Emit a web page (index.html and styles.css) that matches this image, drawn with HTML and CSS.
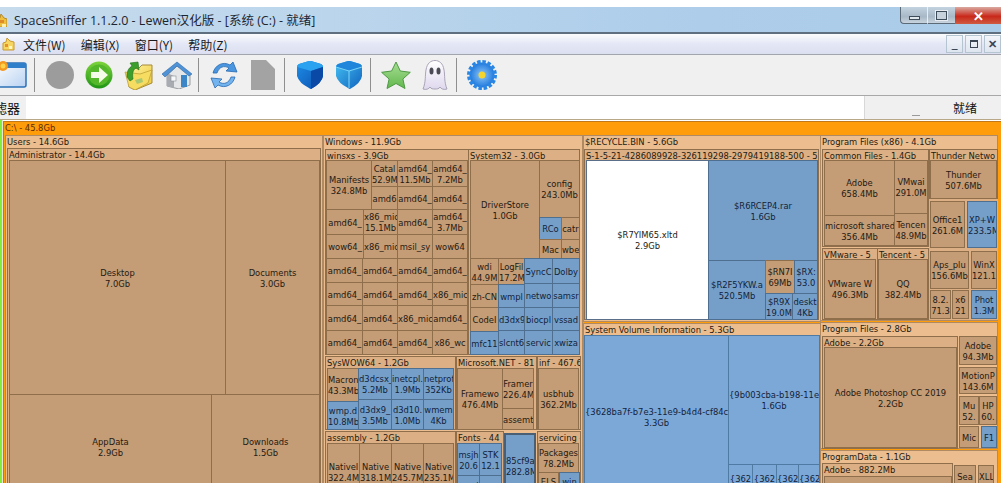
FILE: index.html
```html
<!DOCTYPE html>
<html lang="zh-CN">
<head>
<meta charset="utf-8">
<title>SpaceSniffer</title>
<link rel="stylesheet" href="styles.css">
</head>
<body>
<div class="app">
  <div class="topgap"></div>
  <header class="titlebar">
    <svg class="title-icon" viewBox="0 0 7 14"><path d="M-6 7l6-2 1-4 3 4 3 1v8H-6z" fill="#f0bf3c" stroke="#b98a24"/><path d="M0 7h4v3H0z" fill="#e08a28"/><path d="M2 11h4v3H2z" fill="#fff0b0"/></svg>
    <span class="title-text">SpaceSniffer 1.1.2.0 - Lewen汉化版 - [系统 (C:) - 就绪]</span>
    <div class="winctl">
      <span class="wbtn wmin"><i></i></span>
      <span class="wbtn wmax"><i></i></span>
      <span class="wbtn wclose">✕</span>
    </div>
  </header>
  <nav class="menubar">
    <svg class="menu-icon" viewBox="0 0 13 14"><path d="M1 13V6l3-1 1-4 3 3 4 1v8z" fill="#f6d660" stroke="#c99a30"/><path d="M3 7h3v3H3z" fill="#e8902a"/><path d="M7 9h3v3H7z" fill="#fff6c8"/></svg>
    <span class="menu-item">文件(W)</span>
    <span class="menu-item">编辑(X)</span>
    <span class="menu-item">窗口(Y)</span>
    <span class="menu-item">帮助(Z)</span>
    <div class="mdictl">
      <span class="mbtn">_</span>
      <span class="mbtn mrest"><i></i></span>
      <span class="mbtn mx">✕</span>
    </div>
  </nav>
  <div class="toolbar">
    <span class="tb-first">
      <svg width="27" height="28" viewBox="0 0 27 28"><defs><linearGradient id="w1" x1="0" y1="0" x2="1" y2="1"><stop offset="0" stop-color="#ffffff"/><stop offset="1" stop-color="#b9d2f2"/></linearGradient></defs><rect x="-6" y="2" width="32" height="24" rx="2" fill="url(#w1)" stroke="#2c72b8" stroke-width="1.5"/><rect x="-6" y="2" width="32" height="5" fill="#2f7fcb"/><circle cx="3" cy="5" r="5" fill="#f59a20"/><circle cx="3" cy="5" r="2.5" fill="#ffd24a"/></svg>
    </span>
    <i class="sep"></i>
    <span class="tb"><svg width="28" height="28" viewBox="0 0 28 28"><circle cx="14" cy="14" r="14" fill="#9c9c9c"/></svg></span>
    <span class="tb"><svg width="28" height="28" viewBox="0 0 28 28"><defs><linearGradient id="g1" x1="0" y1="0" x2="0" y2="1"><stop offset="0" stop-color="#7ed43c"/><stop offset="1" stop-color="#1e9416"/></linearGradient></defs><circle cx="14" cy="14" r="13.5" fill="url(#g1)"/><circle cx="14" cy="14" r="10.5" fill="#54b82a"/><path d="M6 11h8V6l9 8-9 8v-5H6z" fill="#f4fbe8"/></svg></span>
    <span class="tb"><svg width="30" height="30" viewBox="0 0 30 30"><defs><linearGradient id="f1" x1="0" y1="0" x2="1" y2="1"><stop offset="0" stop-color="#fff3a0"/><stop offset="1" stop-color="#ecc636"/></linearGradient></defs><path d="M7 8h9l3-3h10v18l-17 7-6-3z" fill="url(#f1)" stroke="#a58a38"/><path d="M6 27L2 12l15 2 12-4-4 13-13 7z" fill="#f6dd62" stroke="#b8982e" stroke-width=".7"/><path d="M4 17c0-7 2-9 5-11L7 3l8-1 1 8-3-2c-3 2-4 5-3 11l-3 2z" fill="#3c9e2c" stroke="#1e6e18" stroke-width=".6"/><path d="M12 20l7-2 1 4-6 2z" fill="#a9c870"/></svg></span>
    <span class="tb"><svg width="30" height="28" viewBox="0 0 30 28"><path d="M5 14v11l12 3 11-4V13L15 5z" fill="#e4e6e8" stroke="#85898e" stroke-width=".8"/><path d="M5 25l7 2V15l-7-3z" fill="#a8acb2"/><path d="M0 13L15 1l15 12-3 2L15 5 3 16z" fill="#4f92d6" stroke="#2e69a8" stroke-width=".6"/><rect x="19" y="14" width="6" height="12" fill="#3c86c8"/><rect x="9" y="15" width="5" height="5" fill="#f6f7f8" stroke="#8b8f94" stroke-width=".6"/></svg></span>
    <i class="sep sep-mid"></i>
    <span class="tb"><svg width="30" height="30" viewBox="0 0 30 30"><path d="M4 13C6 5 14 1 21 5l3-3 4 10-11-1 3-3c-5-3-10-1-12 5z" fill="#4a96e0" stroke="#2769b0" stroke-width=".8"/><path d="M26 17c-2 8-10 12-17 8l-3 3-4-10 11 1-3 3c5 3 10 1 12-5z" fill="#73b3ee" stroke="#2769b0" stroke-width=".8"/></svg></span>
    <span class="tb"><svg width="24" height="30" viewBox="0 0 24 30"><path d="M0 0h15l9 9v21H0z" fill="#a3a3a3"/></svg></span>
    <i class="sep sep-mid"></i>
    <span class="tb"><svg width="27" height="28" viewBox="0 0 27 28"><defs><linearGradient id="c1" x1="0" y1="0" x2="1" y2="1"><stop offset="0" stop-color="#1e8fe8"/><stop offset="1" stop-color="#0c4fae"/></linearGradient></defs><path d="M1 6Q1 4 3 3L13 0Q14 0 15 0L25 3Q27 4 27 6V15Q26 22 15 28Q14 28 13 27Q3 22 1 15z" fill="url(#c1)"/><path d="M1 6Q1 4 3 3L13 0Q14 0 15 0L25 3Q27 4 27 6L15 10z" fill="#2aa2ef"/><path d="M15 10L27 6V15Q26 22 15 28z" fill="#0b49a6"/></svg></span>
    <span class="tb"><svg width="27" height="28" viewBox="0 0 27 28"><defs><linearGradient id="c2" x1="0" y1="0" x2="1" y2="1"><stop offset="0" stop-color="#45c0f2"/><stop offset="1" stop-color="#0f62be"/></linearGradient></defs><path d="M1 6Q1 4 3 3L13 0Q14 0 15 0L25 3Q27 4 27 6V15Q26 22 15 28Q14 28 13 27Q3 22 1 15z" fill="url(#c2)"/><path d="M1 6Q1 4 3 3L13 0Q14 0 15 0L25 3Q27 4 27 6L14 10z" fill="#1f86dc"/><path d="M14 10v17" stroke="#80d8f8" stroke-width="1"/><path d="M1 6l13 4 13-4" fill="none" stroke="#7ad4f6" stroke-width="1"/></svg></span>
    <i class="sep sep-mid"></i>
    <span class="tb"><svg width="30" height="28" viewBox="0 0 30 28"><defs><linearGradient id="s1" x1="0" y1="0" x2="0" y2="1"><stop offset="0" stop-color="#a7dd92"/><stop offset="1" stop-color="#62b84e"/></linearGradient></defs><path d="M15 1l4.300 9 10 1.300-7.400 6.700 2.100 9.500-9-5-9 5 2.100-9.500L.6 11.300l10-1.300z" fill="url(#s1)" stroke="#4e9a44"/></svg></span>
    <span class="tb"><svg width="26" height="30" viewBox="0 0 26 30"><defs><linearGradient id="h1" x1="0" y1="0" x2="0" y2="1"><stop offset="0" stop-color="#ffffff"/><stop offset="1" stop-color="#dfd8ee"/></linearGradient></defs><path d="M1 29C4 22 3 15 4 10 5 3 9 .5 13 .5S21 3 22 10c1 5 0 12 3 19-3 1-6 0-7-2-1 2-3 2-5 2s-4 0-5-2c-1 2-4 3-7 2z" fill="url(#h1)" stroke="#a9a3b8"/><ellipse cx="9.500" cy="11" rx="2" ry="3.600" fill="#4a4a55"/><ellipse cx="16.500" cy="11" rx="2" ry="3.600" fill="#4a4a55"/></svg></span>
    <i class="sep sep-mid"></i>
    <span class="tb"><svg width="30" height="30" viewBox="0 0 30 30"><defs><radialGradient id="b1"><stop offset="0" stop-color="#8fc8fa"/><stop offset="1" stop-color="#1f78dc"/></radialGradient></defs><circle cx="15" cy="15" r="12.500" fill="url(#b1)"/><circle cx="15" cy="15" r="13" fill="none" stroke="#2a86e4" stroke-width="4" stroke-dasharray="3.400 1.700"/><circle cx="15" cy="15" r="3.500" fill="#f4d42e"/></svg></span>
  </div>
  <div class="filterbar">
    <label class="filter-label">滤器</label>
    <div class="filter-input"></div>
    <span class="filter-grip"></span>
    <span class="filter-status">就绪</span>
  </div>
  <main class="treemap">
    <div class="t root" style="left:3px;top:1px;width:1000px;height:366px"><b>C:\ - 45.8Gb</b></div>

    <div class="t l1" style="left:5px;top:15px;width:318px;height:350px"><b>Users - 14.6Gb</b></div>
    <div class="t l2" style="left:7px;top:28px;width:314px;height:340px"><b>Administrator - 14.4Gb</b></div>
    <div class="t lf" style="left:9px;top:40px;width:217px;height:235px"><p>Desktop<br>7.0Gb</p></div>
    <div class="t lf" style="left:225px;top:40px;width:95px;height:235px"><p>Documents<br>3.0Gb</p></div>
    <div class="t lf" style="left:9px;top:274px;width:203px;height:105px"><p>AppData<br>2.9Gb</p></div>
    <div class="t lf" style="left:211px;top:274px;width:109px;height:105px"><p>Downloads<br>1.5Gb</p></div>

    <div class="t l1" style="left:323px;top:15px;width:260px;height:350px"><b>Windows - 11.9Gb</b></div>
    <div class="t l2" style="left:325px;top:29px;width:144px;height:206px"><b>winsxs - 3.9Gb</b></div>
    <div class="t lf" style="left:326px;top:40px;width:46px;height:50px"><p>Manifests<br>324.8Mb</p></div>
    <div class="t lf" style="left:371px;top:40px;width:27px;height:27px"><p>Catal<br>52.9M</p></div>
    <div class="t lf" style="left:371px;top:66px;width:27px;height:24px"><p>amd6</p></div>
    <div class="t lf" style="left:397px;top:40px;width:36px;height:27px"><p>amd64_<br>11.5Mb</p></div>
    <div class="t lf" style="left:432px;top:40px;width:36px;height:27px"><p>amd64_<br>7.2Mb</p></div>
    <div class="t lf" style="left:397px;top:66px;width:36px;height:24px"><p>amd64_</p></div>
    <div class="t lf" style="left:432px;top:66px;width:36px;height:24px"><p>amd64_</p></div>
    <div class="t lf" style="left:326px;top:89px;width:38px;height:26px"><p>amd64_</p></div>
    <div class="t lf" style="left:363px;top:89px;width:35px;height:26px"><p>x86_mic<br>15.1Mb</p></div>
    <div class="t lf" style="left:397px;top:89px;width:36px;height:26px"><p>amd64_</p></div>
    <div class="t lf" style="left:432px;top:89px;width:36px;height:26px"><p>amd64_<br>3.7Mb</p></div>
    <div class="t lf" style="left:326px;top:114px;width:38px;height:25px"><p>wow64_</p></div>
    <div class="t lf" style="left:363px;top:114px;width:35px;height:25px"><p>x86_mic</p></div>
    <div class="t lf" style="left:397px;top:114px;width:36px;height:25px"><p>msil_sy</p></div>
    <div class="t lf" style="left:432px;top:114px;width:36px;height:25px"><p>wow64</p></div>
    <div class="t lf" style="left:326px;top:138px;width:37px;height:25px"><p>amd64_</p></div>
    <div class="t lf" style="left:362px;top:138px;width:36px;height:25px"><p>amd64_</p></div>
    <div class="t lf" style="left:397px;top:138px;width:36px;height:25px"><p>amd64_</p></div>
    <div class="t lf" style="left:432px;top:138px;width:36px;height:25px"><p>amd64_</p></div>
    <div class="t lf" style="left:326px;top:162px;width:37px;height:24px"><p>amd64_</p></div>
    <div class="t lf" style="left:362px;top:162px;width:36px;height:24px"><p>amd64_</p></div>
    <div class="t lf" style="left:397px;top:162px;width:36px;height:24px"><p>amd64_</p></div>
    <div class="t lf" style="left:432px;top:162px;width:36px;height:24px"><p>x86_mic</p></div>
    <div class="t lf" style="left:326px;top:185px;width:37px;height:26px"><p>amd64_</p></div>
    <div class="t lf" style="left:362px;top:185px;width:36px;height:26px"><p>amd64_</p></div>
    <div class="t lf" style="left:397px;top:185px;width:36px;height:26px"><p>x86_mic</p></div>
    <div class="t lf" style="left:432px;top:185px;width:36px;height:26px"><p>amd64_</p></div>
    <div class="t lf" style="left:326px;top:210px;width:37px;height:25px"><p>amd64_</p></div>
    <div class="t lf" style="left:362px;top:210px;width:36px;height:25px"><p>amd64_</p></div>
    <div class="t lf" style="left:397px;top:210px;width:36px;height:25px"><p>amd64_</p></div>
    <div class="t lf" style="left:432px;top:210px;width:36px;height:25px"><p>x86_wc</p></div>

    <div class="t l2" style="left:468px;top:29px;width:112px;height:206px"><b>System32 - 3.0Gb</b></div>
    <div class="t lf" style="left:470px;top:40px;width:70px;height:99px"><p>DriverStore<br>1.0Gb</p></div>
    <div class="t lf" style="left:539px;top:40px;width:41px;height:58px"><p>config<br>243.0Mb</p></div>
    <div class="t bl" style="left:539px;top:97px;width:23px;height:23px"><p>RCo</p></div>
    <div class="t lf" style="left:561px;top:97px;width:19px;height:23px"><p>catr</p></div>
    <div class="t lf" style="left:539px;top:119px;width:23px;height:20px"><p>Mac</p></div>
    <div class="t lf" style="left:561px;top:119px;width:19px;height:20px"><p>wbe</p></div>
    <div class="t lf" style="left:470px;top:138px;width:29px;height:27px"><p>wdi<br>44.9M</p></div>
    <div class="t lf" style="left:498px;top:138px;width:27px;height:27px"><p>LogFil<br>17.2M</p></div>
    <div class="t bl" style="left:524px;top:138px;width:29px;height:26px"><p>SyncC</p></div>
    <div class="t bl" style="left:552px;top:138px;width:28px;height:26px"><p>Dolby</p></div>
    <div class="t lf" style="left:470px;top:164px;width:29px;height:24px"><p>zh-CN</p></div>
    <div class="t lf" style="left:470px;top:187px;width:29px;height:25px"><p>CodeI</p></div>
    <div class="t bl" style="left:498px;top:164px;width:27px;height:24px"><p>wmpl</p></div>
    <div class="t bl" style="left:498px;top:187px;width:27px;height:25px"><p>d3dx9</p></div>
    <div class="t bl" style="left:524px;top:163px;width:29px;height:25px"><p>netwo</p></div>
    <div class="t bl" style="left:552px;top:163px;width:28px;height:25px"><p>samsr</p></div>
    <div class="t bl" style="left:524px;top:187px;width:29px;height:24px"><p>biocpl</p></div>
    <div class="t bl" style="left:552px;top:187px;width:28px;height:24px"><p>vssad</p></div>
    <div class="t bl" style="left:470px;top:211px;width:29px;height:24px"><p>mfc11</p></div>
    <div class="t bl" style="left:498px;top:210px;width:27px;height:25px"><p>slcnt6</p></div>
    <div class="t bl" style="left:524px;top:210px;width:29px;height:25px"><p>servic</p></div>
    <div class="t bl" style="left:552px;top:210px;width:28px;height:25px"><p>xwiza</p></div>

    <div class="t l2" style="left:325px;top:236px;width:131px;height:74px"><b>SysWOW64 - 1.2Gb</b></div>
    <div class="t lf" style="left:327px;top:248px;width:32px;height:34px"><p>Macron<br>43.3Mb</p></div>
    <div class="t bl" style="left:358px;top:248px;width:34px;height:32px"><p>d3dcsx_<br>5.2Mb</p></div>
    <div class="t bl" style="left:391px;top:248px;width:33px;height:32px"><p>inetcpl.<br>1.9Mb</p></div>
    <div class="t bl" style="left:423px;top:248px;width:31px;height:32px"><p>netprof<br>352Kb</p></div>
    <div class="t bl" style="left:327px;top:281px;width:32px;height:29px"><p>wmp.d<br>10.8Mb</p></div>
    <div class="t bl" style="left:358px;top:279px;width:34px;height:31px"><p>d3dx9_<br>3.5Mb</p></div>
    <div class="t bl" style="left:391px;top:279px;width:33px;height:31px"><p>d3d10.<br>1.0Mb</p></div>
    <div class="t bl" style="left:423px;top:279px;width:31px;height:31px"><p>wmem<br>4Kb</p></div>

    <div class="t l2" style="left:456px;top:236px;width:81px;height:74px"><b>Microsoft.NET - 81</b></div>
    <div class="t lf" style="left:457px;top:248px;width:46px;height:62px"><p>Framewo<br>476.4Mb</p></div>
    <div class="t lf" style="left:502px;top:248px;width:32px;height:41px"><p>Framer<br>226.4M</p></div>
    <div class="t lf" style="left:502px;top:288px;width:32px;height:22px"><p>assemt</p></div>
    <div class="t l2" style="left:537px;top:236px;width:44px;height:74px"><b>inf - 467.6</b></div>
    <div class="t lf" style="left:538px;top:248px;width:41px;height:62px"><p>usbhub<br>362.2Mb</p></div>

    <div class="t l2" style="left:325px;top:311px;width:131px;height:80px"><b>assembly - 1.2Gb</b></div>
    <div class="t lf" style="left:327px;top:323px;width:33px;height:58px"><p>NativeI<br>322.4M</p></div>
    <div class="t lf" style="left:359px;top:323px;width:33px;height:58px"><p>Native<br>318.1M</p></div>
    <div class="t lf" style="left:391px;top:323px;width:33px;height:58px"><p>Native<br>245.7M</p></div>
    <div class="t lf" style="left:423px;top:323px;width:31px;height:58px"><p>Native<br>235.1M</p></div>

    <div class="t l2" style="left:456px;top:311px;width:48px;height:80px"><b>Fonts - 44</b></div>
    <div class="t bl" style="left:457px;top:323px;width:23px;height:33px"><p>msjh<br>20.6</p></div>
    <div class="t bl" style="left:479px;top:323px;width:23px;height:33px"><p>STK<br>12.1</p></div>
    <div class="t bl" style="left:457px;top:355px;width:23px;height:20px"><p>msoi</p></div>
    <div class="t bl" style="left:479px;top:355px;width:23px;height:20px"><p>ygas</p></div>
    <div class="t bl bl-strong" style="left:504px;top:313px;width:32px;height:66px"><p>85cf9a<br>282.8M</p></div>

    <div class="t l2" style="left:537px;top:311px;width:44px;height:80px"><b>servicing -</b></div>
    <div class="t lf" style="left:538px;top:323px;width:41px;height:30px"><p>Packages<br>78.2Mb</p></div>
    <div class="t lf" style="left:538px;top:352px;width:21px;height:18px"><p>ELS</p></div>
    <div class="t bl" style="left:559px;top:352px;width:21px;height:18px"><p>win</p></div>

    <div class="t l1" style="left:583px;top:15px;width:238px;height:187px"><b>$RECYCLE.BIN - 5.6Gb</b></div>
    <div class="t l2" style="left:584px;top:29px;width:235px;height:171px"><b>S-1-5-21-4286089928-326119298-2979419188-500 - 5.6</b></div>
    <div class="t wh" style="left:586px;top:40px;width:123px;height:160px"><p>$R7YIM65.xltd<br>2.9Gb</p></div>
    <div class="t bl" style="left:708px;top:40px;width:110px;height:101px"><p>$R6RCEP4.rar<br>1.6Gb</p></div>
    <div class="t bl" style="left:708px;top:140px;width:58px;height:60px"><p>$R2F5YKW.a<br>520.5Mb</p></div>
    <div class="t lf" style="left:765px;top:140px;width:30px;height:34px"><p>$RN7I<br>69Mb</p></div>
    <div class="t bl" style="left:794px;top:140px;width:24px;height:34px"><p>$RX:<br>53.0</p></div>
    <div class="t bl" style="left:765px;top:173px;width:28px;height:27px"><p>$R9X<br>19.0M</p></div>
    <div class="t bl" style="left:792px;top:173px;width:26px;height:27px"><p>deskt<br>4Kb</p></div>

    <div class="t l1" style="left:583px;top:203px;width:238px;height:180px"><b>System Volume Information - 5.3Gb</b></div>
    <div class="t sv" style="left:584px;top:215px;width:145px;height:164px"><p>{3628ba7f-b7e3-11e9-b4d4-cf84cf2<br>3.3Gb</p></div>
    <div class="t sv" style="left:728px;top:215px;width:92px;height:130px"><p>{9b003cba-b198-11e9<br>1.6Gb</p></div>
    <div class="t sv" style="left:728px;top:344px;width:25px;height:28px"><p>{362</p></div>
    <div class="t sv" style="left:752px;top:344px;width:25px;height:28px"><p>{362</p></div>
    <div class="t sv" style="left:776px;top:344px;width:23px;height:28px"><p>{362</p></div>
    <div class="t sv" style="left:798px;top:344px;width:22px;height:28px"><p>{362</p></div>

    <div class="t l1" style="left:820px;top:15px;width:178px;height:186px"><b>Program Files (x86) - 4.1Gb</b></div>
    <div class="t l2" style="left:822px;top:29px;width:107px;height:98px"><b>Common Files - 1.4Gb</b></div>
    <div class="t lf" style="left:824px;top:40px;width:71px;height:56px"><p>Adobe<br>658.4Mb</p></div>
    <div class="t lf" style="left:894px;top:40px;width:34px;height:54px"><p>VMwai<br>291.0M</p></div>
    <div class="t lf" style="left:824px;top:95px;width:71px;height:31px"><p>microsoft shared<br>356.4Mb</p></div>
    <div class="t lf" style="left:894px;top:93px;width:34px;height:33px"><p>Tencen<br>48.9Mb</p></div>
    <div class="t l2" style="left:929px;top:29px;width:69px;height:50px"><b>Thunder Netwo</b></div>
    <div class="t lf" style="left:930px;top:40px;width:67px;height:39px"><p>Thunder<br>507.6Mb</p></div>
    <div class="t l2 group" style="left:929px;top:79px;width:69px;height:50px"></div>
    <div class="t lf" style="left:930px;top:81px;width:35px;height:47px"><p>Office1<br>261.6M</p></div>
    <div class="t bl" style="left:967px;top:81px;width:30px;height:47px"><p>XP+W<br>233.5M</p></div>
    <div class="t l2" style="left:822px;top:128px;width:56px;height:72px"><b>VMware - 5</b></div>
    <div class="t lf" style="left:824px;top:139px;width:52px;height:60px"><p>VMware W<br>496.3Mb</p></div>
    <div class="t l2" style="left:877px;top:128px;width:52px;height:72px"><b>Tencent - 5</b></div>
    <div class="t lf" style="left:878px;top:139px;width:50px;height:60px"><p>QQ<br>382.4Mb</p></div>
    <div class="t l2 group" style="left:929px;top:129px;width:69px;height:71px"></div>
    <div class="t lf" style="left:930px;top:131px;width:39px;height:38px"><p>Aps_plu<br>156.6Mb</p></div>
    <div class="t lf" style="left:971px;top:131px;width:26px;height:38px"><p>WinX<br>121.1</p></div>
    <div class="t lf" style="left:930px;top:170px;width:21px;height:29px"><p>8.2.<br>71.3</p></div>
    <div class="t lf" style="left:952px;top:170px;width:17px;height:29px"><p>x6<br>21</p></div>
    <div class="t bl" style="left:971px;top:170px;width:26px;height:29px"><p>Phot<br>1.3M</p></div>

    <div class="t l1" style="left:820px;top:202px;width:178px;height:127px"><b>Program Files - 2.8Gb</b></div>
    <div class="t l2" style="left:822px;top:216px;width:136px;height:113px"><b>Adobe - 2.2Gb</b></div>
    <div class="t lf" style="left:824px;top:227px;width:133px;height:101px"><p>Adobe Photoshop CC 2019<br>2.2Gb</p></div>
    <div class="t lf" style="left:959px;top:216px;width:38px;height:29px"><p>Adobe<br>94.3Mb</p></div>
    <div class="t lf" style="left:959px;top:247px;width:38px;height:27px"><p>MotionP<br>143.6M</p></div>
    <div class="t lf" style="left:959px;top:276px;width:20px;height:29px"><p>Mu<br>52.</p></div>
    <div class="t lf" style="left:979px;top:276px;width:18px;height:29px"><p>HP<br>60.</p></div>
    <div class="t lf" style="left:959px;top:306px;width:20px;height:22px"><p>Mic</p></div>
    <div class="t bl" style="left:981px;top:306px;width:16px;height:22px"><p>F1</p></div>

    <div class="t l1" style="left:820px;top:330px;width:178px;height:60px"><b>ProgramData - 1.1Gb</b></div>
    <div class="t l2" style="left:822px;top:343px;width:131px;height:50px"><b>Adobe - 882.2Mb</b></div>
    <div class="t lf" style="left:824px;top:356px;width:128px;height:40px"></div>
    <div class="t lf" style="left:954px;top:345px;width:22px;height:34px"><p>Sea<br>110</p></div>
    <div class="t lf" style="left:978px;top:345px;width:16px;height:34px"><p>XLL<br>88</p></div>
  </main>
</div>
</body>
</html>
```
FILE: styles.css
```css
* { box-sizing: border-box; }
html, body { margin: 0; padding: 0; height: 100%; overflow: hidden; background: #fff; }
body { font-family: "Noto Sans CJK SC", "Liberation Sans", sans-serif; }

.app { display: flex; flex-direction: column; width: 1001px; height: 483px; overflow: hidden; }
.topgap { height: 7px; background: #fff; flex: none; }

.titlebar {
  flex: none; height: 27px; display: flex; align-items: center; position: relative;
  background: linear-gradient(90deg, #c6dbec 0%, #bcd6ec 30%, #adcdea 70%, #abcce8 100%);
  border-bottom: 2px solid #5f6f80;
  overflow: hidden;
}
.title-icon { width: 7px; height: 14px; flex: none; margin-right: 7px; overflow: hidden; }
.title-text { font-family: "Open Sans", "Noto Sans CJK SC", sans-serif; font-size: 12.5px; color: #1d2630; white-space: nowrap; }
.winctl { margin-left: auto; display: flex; align-self: flex-start; height: 17px; }
.wbtn { display: flex; align-items: center; justify-content: center; height: 17px; }
.wmin, .wmax { background: linear-gradient(#c4d3e0, #a9b8c6 60%, #c8d4de); border-bottom: 1px solid #5c6a78; }
.wmin { width: 28px; border-left: 1px solid #5c6a78; border-bottom-left-radius: 4px; border-right: 1px solid #e8eef4; }
.wmin i { display: block; width: 11px; height: 4px; background: #dfe6ec; border: 1px solid #3f4c59; margin-top: 5px; }
.wmax { width: 27px; }
.wmax i { display: block; width: 11px; height: 9px; background: #c8d2dc; border: 1px solid #3f4c59; box-shadow: 0 0 0 1px #e6ecf2; }
.wclose { width: 46px; background: linear-gradient(#d9a9a0, #c9281a 55%, #cf5a40); color: #fff; font-size: 13px; font-weight: 700; line-height: 1; }

.menubar {
  flex: none; height: 21px; display: flex; align-items: center;
  background: linear-gradient(#fbfcfe, #e4e7f5 50%, #dcdff0);
  border-bottom: 1px solid #a2a5ad;
  position: relative;
}
.menu-icon { width: 13px; height: 14px; margin: 0 8px 0 2px; flex: none; }
.menu-item { font-size: 12px; color: #1a1a1a; margin-right: 15px; white-space: nowrap; }
.mdictl { margin-left: auto; display: flex; gap: 2px; height: 19px; }
.mbtn {
  width: 17px; height: 18px; display: flex; align-items: center; justify-content: center;
  border: 1px solid #b4c4d0; background: linear-gradient(#f2f5fa, #dfe5ef);
  color: #3b4654; font-size: 11px; font-weight: 700; line-height: 1;
}
.mrest i { display: block; width: 8px; height: 8px; border: 1.500px solid #3b4654; border-top-width: 2px; }
.mx { font-size: 11px; }

.toolbar {
  flex: none; height: 41px; display: flex; align-items: center;
  background: #f0f0f0; border-bottom: 1px solid #a8a8a8;
}
.tb-first { width: 34px; flex: none; display: flex; align-items: center; }
.tb { width: 39px; flex: none; display: flex; align-items: center; justify-content: center; }
.sep { display: block; width: 1px; height: 34px; background: #8f8f8f; margin-right: 5px; flex: none; }
.sep-mid { margin-left: 2px; }

.filterbar { flex: none; height: 24px; display: flex; align-items: center; background: #f0f0f0; position: relative; border-bottom: 1px solid #b8a888; }
.filter-label { width: 20px; font-size: 13px; color: #111; margin-right: 6px; overflow: hidden; white-space: nowrap; direction: rtl; flex: none; }
.filter-input { width: 839px; height: 23px; background: #fff; border-right: 1px solid #d8d8d8; align-self: flex-start; flex: none; }
.filter-grip { width: 8px; height: 1px; background: #9a9a9a; margin: 15px 0 0 47px; flex: none; }
.filter-status { font-size: 12px; color: #111; margin-left: 33px; white-space: nowrap; }

.treemap { flex: 1; position: relative; overflow: hidden; background: linear-gradient(90deg, #84ec3c 0, #84ec3c 2px, #e8e8d8 2px, #e8e8d8 3px, #fff 3px); }
.t {
  position: absolute; overflow: hidden; border: 1px solid #8f6e4c;
  font-family: "DejaVu Sans", sans-serif; font-stretch: condensed; font-size: 9.3px; line-height: 11px; color: #241a12; white-space: nowrap;
}
.t b { display: block; font-weight: 400; padding: 0 0 0 1px; height: 11px; overflow: hidden; line-height: 11px; }
.t p { margin: 0; width: 100%; text-align: center; }
.root { background: #ff9c0a; border-color: #c07818; }
.root b { color: #5a2b05; height: 12px; line-height: 12px; }
.l1 { background: #ebbd8f; border-color: #b08a62; }
.l1 b { height: 12px; line-height: 12px; }
.l2 { background: #dcb084; }
.group { background: #dcb084; border-color: #dcb084; }
.lf, .bl, .sv, .wh { display: flex; align-items: center; }
.lf { background: #c49c76; }
.bl { background: #759fc9; border-color: #4f6f90; color: #12233a; }
.bl-strong { border-color: #4a5f74; border-width: 2px; }
.sv { background: #7ca8d8; border-color: #4f7aa4; color: #12233a; }
.wh { background: #fff; border-color: #5a6f8a; }
```
